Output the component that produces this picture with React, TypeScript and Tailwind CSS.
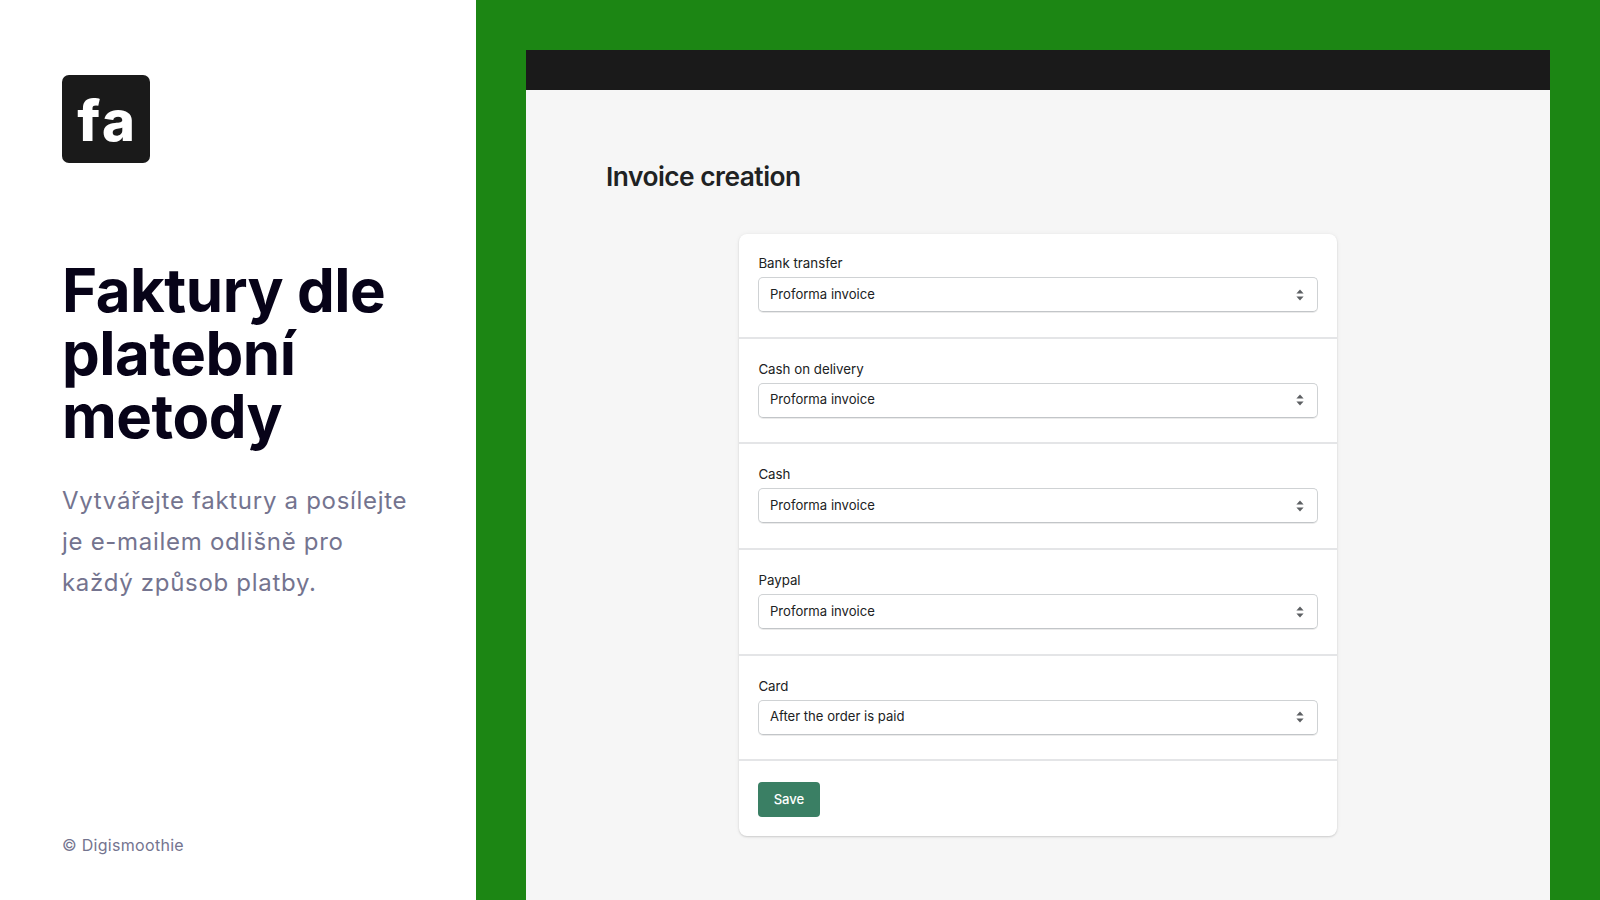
const rows = [
  { label: "Bank transfer", value: "Proforma invoice" },
  { label: "Cash on delivery", value: "Proforma invoice" },
  { label: "Cash", value: "Proforma invoice" },
  { label: "Paypal", value: "Proforma invoice" },
  { label: "Card", value: "After the order is paid" },
];

function Arrows() {
  return (
    <svg width="8" height="12" viewBox="0 0 8 12">
      <path d="M4 0.5 L7.6 4.6 H0.4 Z" fill="#5c5f62" />
      <path d="M4 11.5 L7.6 7.4 H0.4 Z" fill="#5c5f62" />
    </svg>
  );
}

export default function App() {
  return (
    <div className="flex h-[900px] w-full overflow-hidden bg-[#1c8614]">
      <aside className="flex w-[476px] shrink-0 flex-col bg-white pl-[62px] pt-[75px] pb-[45px] font-['Inter',sans-serif]">
        <div className="flex h-[88px] w-[88px] items-center justify-center rounded-[7px] bg-[#1a1a1a] pt-[4px] pl-[3px] text-[56px] font-extrabold leading-none tracking-[3px] text-white">
          fa
        </div>
        <h1 className="mt-[96px] w-[370px] text-[60px] font-bold leading-[63px] tracking-[-0.5px] text-[#070318]">
          Faktury dle platební metody
        </h1>
        <p className="mt-[32px] w-[352px] text-[24px] leading-[41px] tracking-[0.7px] text-[#74748f]">
          Vytvářejte faktury a posílejte je e-mailem odlišně pro každý způsob platby.
        </p>
        <div className="mt-auto text-[16px] leading-[20px] tracking-[0.3px] text-[#74748f]">© Digismoothie</div>
      </aside>
      <main className="ml-[50px] mr-[50px] mt-[50px] flex flex-1 flex-col bg-[#f6f6f6] font-['Inter',sans-serif]">
        <div className="h-[40px] bg-[#1a1a1a]" />
        <div className="px-[80px] pt-[71px]">
          <h2 className="text-[26.3px] font-semibold leading-[32px] tracking-[-0.5px] text-[#202223]">Invoice creation</h2>
        </div>
        <div className="ml-[213px] mt-[41px] w-[598px] rounded-[8px] bg-white shadow-[0_0_5px_rgba(23,24,24,0.05),0_1px_2px_rgba(0,0,0,0.15)]">
          {rows.map((r) => (
            <div key={r.label} className="h-[105.7px] border-b-2 border-[#e4e5e7] px-[19px] pt-[20px] first:h-[104.7px] first:pt-[19px]">
              <div className="mb-[4px] pl-[0.4px] text-[13.3px] leading-[20px] text-[#202223]">{r.label}</div>
              <div className="flex h-[35px] items-center justify-between rounded-[5px] border border-[#cfd2d4] border-b-[#c2c5c8] pl-[11px] pr-[13px] text-[13.1px] text-[#202223] shadow-[0_1px_0_rgba(0,0,0,0.08)]">
                <span>{r.value}</span>
                <Arrows />
              </div>
            </div>
          ))}
          <div className="px-[19px] pb-[19px] pt-[21px]">
            <button className="h-[35px] w-[62px] rounded-[4px] bg-[#3a7f64] text-[13.1px] font-medium text-white">Save</button>
          </div>
        </div>
      </main>
    </div>
  );
}
